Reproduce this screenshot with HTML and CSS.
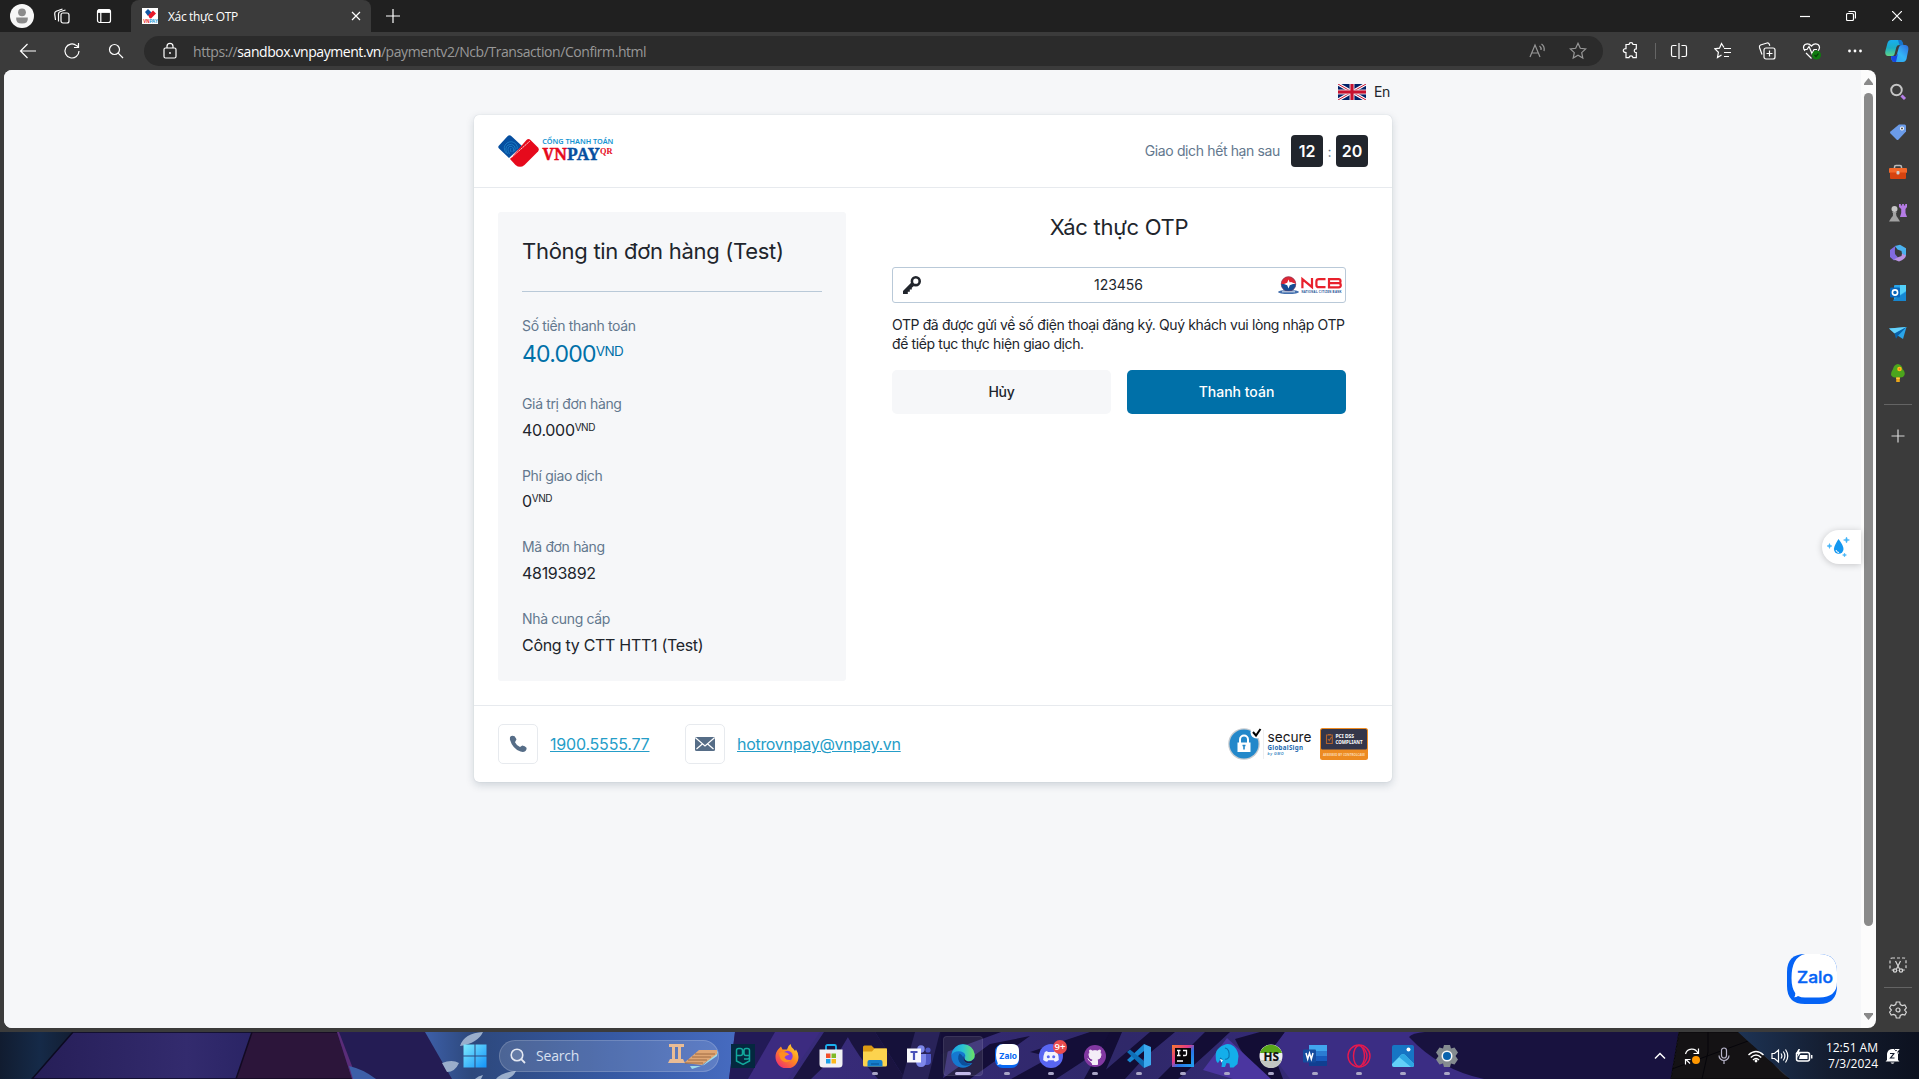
FILE: index.html
```html
<!DOCTYPE html>
<html lang="vi">
<head>
<meta charset="utf-8">
<title>Xác thực OTP</title>
<link rel="stylesheet" href="styles.css">
</head>
<body>
<div class="desktop">
  <div class="browser">
    <header class="tabstrip">
      <div class="tabstrip-left">
        <svg class="profile" width="24" height="24" viewBox="0 0 24 24"><circle cx="12" cy="12" r="12" fill="#f7f7f7"/><circle cx="12" cy="8.300" r="3.900" fill="#8b8b8b"/><path d="M6.200 13.400h11.600q.7 6.200-5.800 6.200t-5.800-6.200z" fill="#8b8b8b"/></svg>
        <svg class="ico" width="18" height="18" viewBox="0 0 18 18"><rect x="8" y="6" width="8" height="10" rx="2"/><path d="M5.500 14.500V7q0-2 2-2.500l5-1.500M2.500 13l-.8-6q-.2-2 1.500-2.700L9.500 2"/></svg>
        <svg class="ico" width="16" height="16" viewBox="0 0 16 16"><rect x="1.500" y="1.500" width="13" height="13" rx="2"/><path d="M2 3.200h12" stroke-width="3.400"/><path d="M4.800 4v10"/></svg>
      </div>
      <div class="tab">
        <svg width="16" height="16" viewBox="0 0 16 16"><rect width="16" height="16" fill="#fff"/><path d="M3 4l3-3 3.500 3.500L6 8z" fill="#1257a4"/><path d="M6.200 7.300L11 2.500l3 3L9 10.500 7.500 10z" fill="#e81929"/><text x="1.200" y="15" font-family="Liberation Sans" font-weight="700" font-size="4.500" fill="#e81929">VN<tspan fill="#1695d6">PAY</tspan></text></svg>
        <span class="tab-title">Xác thực OTP</span>
        <svg class="ico" width="10" height="10" viewBox="0 0 10 10"><path d="M1 1l8 8M9 1L1 9"/></svg>
      </div>
      <svg class="ico newtab" width="14" height="14" viewBox="0 0 14 14"><path d="M7 0v14M0 7h14"/></svg>
      <div class="window-controls">
        <svg class="ico" width="10" height="10" viewBox="0 0 10 10"><path d="M0 5.500h10"/></svg>
        <svg class="ico" width="10" height="10" viewBox="0 0 10 10"><rect x=".5" y="2.500" width="7" height="7" rx="1.300"/><path d="M2.500.5H8Q9.500.5 9.500 2v5.500"/></svg>
        <svg class="ico" width="10" height="10" viewBox="0 0 10 10"><path d="M0 0l10 10M10 0L0 10"/></svg>
      </div>
    </header>

    <div class="toolbar">
      <div class="nav">
        <svg class="ico" width="18" height="16" viewBox="0 0 18 16"><path d="M17 8H1.500M8.500 1l-7 7 7 7"/></svg>
        <svg class="ico" width="18" height="18" viewBox="0 0 18 18"><path d="M16 9A7 7 0 1 1 13.500 3.600L15.500 5M15.500 1v4.500H11"/></svg>
        <svg class="ico" width="16" height="16" viewBox="0 0 16 16"><circle cx="6.500" cy="6.500" r="5"/><path d="M10.200 10.200L15 15"/></svg>
      </div>
      <div class="address">
        <svg class="ico" width="14" height="18" viewBox="0 0 14 18"><rect x="1" y="6" width="12" height="10" rx="1.500"/><path d="M4 6V4.300a3 3 0 0 1 6 0V6"/><circle cx="7" cy="11" r=".9" fill="#fff" stroke="none"/></svg>
        <span class="url">https://<b>sandbox.vnpayment.vn</b>/paymentv2/Ncb/Transaction/Confirm.html</span>
        <svg class="ico dim" width="18" height="16" viewBox="0 0 18 16"><path d="M1 14L6 2l5 12M3 10h6M10.500 3q2 1.500 1.500 4M12.500 1q3.500 2.500 2.500 7"/></svg>
        <svg class="ico dim" width="18" height="18" viewBox="0 0 18 18"><path d="M9 1.300l2.300 5 5.400.6-4 3.700 1.100 5.400L9 13.300 4.200 16l1.100-5.400-4-3.700 5.400-.6z"/></svg>
      </div>
      <div class="actions">
        <svg class="ico" width="18" height="18" viewBox="0 0 18 18"><path d="M4 2.500h3q.2-1.800 2-1.800t2 1.800h3.300v4.300q-2 0-2 1.900t2 1.900v5h-3.300q-.2-1.800-2-1.800t-2 1.800H4v-5q-2.700 0-2.700-2T4 6.700z"/></svg>
        <i class="bar"></i>
        <svg class="ico" width="18" height="16" viewBox="0 0 18 16"><path d="M9 0v16M6.500 2.500H3q-1.500 0-1.500 1.500v8q0 1.500 1.500 1.500h3.500M11.500 2.500H15q1.500 0 1.500 1.500v8q0 1.500-1.500 1.500h-3.500"/></svg>
        <svg class="ico" width="18" height="18" viewBox="0 0 18 18"><path d="M10 5.500L7.500 1.500 5.500 6.200.9 6.800l3.500 3.500L3.500 15.500l4-2.400M10 6.500h7M10 10.500h7M10 14.500h5"/></svg>
        <svg class="ico" width="18" height="18" viewBox="0 0 18 18"><rect x="6" y="6" width="11" height="11" rx="2"/><path d="M11.500 8.500v6M8.500 11.500h6M4 12.500l-2.500-7q-.5-1.800 1-2.500L9 1q1.700-.3 2.300 1.300l.5 1.500"/></svg>
        <svg class="ico" width="20" height="18" viewBox="0 0 20 18"><path d="M3 9Q0 5 3 2.500 6.500.5 9.500 4q3-3.500 6.500-1.500Q19 5 16 9M4 11l5.500 5.500M1.500 7.500H5l2-3 3 7 2-4h3"/><circle cx="14.500" cy="13" r="4.500" fill="#107c10" stroke="none"/><path d="M12.500 13l1.500 1.500 2.500-3" stroke="#0a3f0a"/></svg>
        <svg class="more" width="16" height="4" viewBox="0 0 16 4"><g fill="#fff"><circle cx="2.500" cy="2" r="1.400"/><circle cx="8" cy="2" r="1.400"/><circle cx="13.500" cy="2" r="1.400"/></g></svg>
        <svg class="copilot" width="24" height="24" viewBox="0 0 24 24"><defs><linearGradient id="cp1" x1="0" y1="0" x2="0" y2="1"><stop offset="0" stop-color="#18aef0"/><stop offset=".5" stop-color="#1badc4"/><stop offset="1" stop-color="#62d686"/></linearGradient><linearGradient id="cp2" x1="1" y1="0" x2="0" y2="1"><stop offset="0" stop-color="#2e6de0"/><stop offset=".5" stop-color="#34b5f5"/><stop offset="1" stop-color="#2a9ff0"/></linearGradient></defs><path d="M6 1h8.500q2 0 2.600 2l1 3h-4q-2 0-2.700 2l-2 7.500Q8.500 17.500 6 17H3Q-.5 16.500.4 12L2.500 4Q3.500 1 6 1z" fill="url(#cp1)"/><path d="M13 1h2q2 0 2.600 2l1 3.500h-4L13 1z" fill="#1674cc"/><path d="M18 23H9.500q-2.300 0-2.800-2L6 17.500h3q2.300 0 3-2.500l2-7q.7-2 3-2h3.500q3.500.7 2.800 5L21.500 20Q20.500 23 18 23z" fill="url(#cp2)"/><path d="M6 17h4q2 0 3-3l-2 9H9.500q-2.300 0-2.800-2z" fill="#1745e0"/></svg>
      </div>
    </div>

    <div class="workspace">
      <div class="viewport">
        <main class="page">
          <div class="lang">
            <svg width="28" height="16" viewBox="0 0 28 16"><rect width="28" height="16" fill="#012169"/><path d="M0 0l28 16M28 0L0 16" stroke="#fff" stroke-width="3.200"/><path d="M0 0l28 16M28 0L0 16" stroke="#c8102e" stroke-width="1"/><path d="M14 0v16M0 8h28" stroke="#e3c8d4" stroke-width="5"/><path d="M14 0v16M0 8h28" stroke="#c8102e" stroke-width="3"/></svg>
            <span>En</span>
          </div>

          <section class="card">
            <div class="card-head">
              <svg width="116" height="32" viewBox="0 0 116 32"><path d="M1 10.500L9.500 1.200q2-1.900 4 0L24 11 11 23 1 13.500q-1.500-1.500 0-3z" fill="#064fa0"/><g fill="none" stroke="#258bd0" stroke-width=".7"><path d="M8 18q-4-6 1-10 5-3 9 1 2 3 1 5M9.500 19q-3.500-6 .5-9 4-2 6.500 1 1.500 3 0 5M11.500 19q-3-5-.2-7.500 3-1 4 1.500.7 2-.3 4M13 17q-1-3 0-4"/></g><path d="M12 24L28.500 5q2-2 4 0l7.500 7.500q1.500 2 0 4L26.500 30q-4.500 3.700-9 0z" fill="#e60a1c"/><path d="M13.500 22.500L32 6" stroke="#fff" stroke-width=".8" stroke-dasharray="2 .5"/><text x="44.300" y="9.300" font-family="Noto Sans" font-weight="600" font-size="7.300" textLength="71" fill="#1494d2">CỔNG THANH TOÁN</text><text x="44.500" y="24.600" font-family="Noto Serif, Liberation Serif, serif" font-weight="700" font-size="17" textLength="57" lengthAdjust="spacingAndGlyphs" fill="#e60a1c" stroke="#e60a1c" stroke-width=".4">VN<tspan fill="#064fa0" stroke="#064fa0">PAY</tspan></text><text x="102" y="18.500" font-family="Liberation Serif, serif" font-weight="700" font-size="9" textLength="12.500" lengthAdjust="spacingAndGlyphs" fill="#e60a1c">QR</text></svg>
              <div class="timer">
                <span class="timer-label">Giao dịch hết hạn sau</span>
                <b>12</b><i>:</i><b>20</b>
              </div>
            </div>

            <div class="card-body">
              <aside class="order">
                <h2>Thông tin đơn hàng (Test)</h2>
                <dl>
                  <div class="total"><dt>Số tiền thanh toán</dt><dd>40.000<sup>VND</sup></dd></div>
                  <div><dt>Giá trị đơn hàng</dt><dd>40.000<sup>VND</sup></dd></div>
                  <div><dt>Phí giao dịch</dt><dd>0<sup>VND</sup></dd></div>
                  <div><dt>Mã đơn hàng</dt><dd>48193892</dd></div>
                  <div><dt>Nhà cung cấp</dt><dd>Công ty CTT HTT1 (Test)</dd></div>
                </dl>
              </aside>
              <div class="otp">
                <h2>Xác thực OTP</h2>
                <div class="field">
                  <svg width="18" height="18" viewBox="0 0 18 18"><circle cx="12.800" cy="5.200" r="3.900" fill="none" stroke="#21252c" stroke-width="2.600"/><path d="M8.600 6.200L0 15v3h4.800v-2.200h2V13.500h2v-1.800l2.700-2.200z" fill="#21252c"/></svg>
                  <span>123456</span>
                  <svg width="64" height="20" viewBox="0 0 64 20"><ellipse cx="10.500" cy="17" rx="10.500" ry="2" fill="#4470ae"/><path d="M3 9a7.500 7.500 0 0 0 15 0z" fill="#164c93"/><path d="M3 9a7.500 7.500 0 0 1 15 0l-5-2-5 2z" fill="#df2633"/><circle cx="10.500" cy="9" r="7.300" fill="none" stroke="#7c3c62" stroke-width=".6"/><path d="M10.500 4.600l1.300 3.100 3.200 1.300-3.200 1.300-1.300 3.100-1.300-3.100L6 9l3.200-1.300z" fill="#fff"/><path d="M4 16.800h13" stroke="#fff" stroke-width=".8"/><g fill="none" stroke="#e8212c" stroke-width="2.200"><path d="M24.400 13.300V4.200l9.600 8V3M47.500 4.200H41q-2.600 0-2.600 2.300v3.400q0 2.300 2.600 2.300h6.500M51 8.200h10.500M51 12.300V4.200h9.500q2 0 2 2t-2 2q2.300 0 2.300 2t-2.300 2.100z"/></g><text x="23.500" y="17.500" font-family="Liberation Sans" font-weight="700" font-size="2.800" textLength="40" fill="#164c93">NATIONAL CITIZEN BANK</text></svg>
                </div>
                <p>OTP đã được gửi về số điện thoại đăng ký. Quý khách vui lòng nhập OTP để tiếp tục thực hiện giao dịch.</p>
                <div class="buttons">
                  <button type="button" class="cancel">Hủy</button>
                  <button type="button" class="pay">Thanh toán</button>
                </div>
              </div>
            </div>

            <footer class="card-foot">
              <span class="contact-icon"><svg width="18" height="18" viewBox="0 0 18 18"><path d="M.9 4.400L1 2q2-2.200 4.600-.7l1.900 3L6 7.200q1.300 3 5 4.700l2.300-1.500q2.700.3 4.200 2.300.4 1.800-1 3.300-2 1.700-5 .6Q3.500 13.500.9 4.400z" fill="#566d87"/></svg></span>
              <a class="phone" href="#">1900.5555.77</a>
              <span class="contact-icon"><svg width="20" height="14" viewBox="0 0 20 14"><rect width="20" height="14" rx="1.500" fill="#566d87"/><path d="M.5.800L10 9 19.500.8M1.500 12l5.800-5M18.500 12l-5.800-5" fill="none" stroke="#fff" stroke-width="1.200"/></svg></span>
              <a class="mail" href="#">hotrovnpay@vnpay.vn</a>
              <div class="badges">
                <svg width="84" height="34" viewBox="0 0 84 34"><circle cx="16" cy="17" r="15.800" fill="#c6cbd0"/><circle cx="16" cy="17" r="14.500" fill="#2388ca"/><circle cx="28.500" cy="5.500" r="6" fill="#fff"/><path d="M25 5l3 3.500L32.500 2" fill="none" stroke="#000" stroke-width="2"/><rect x="9.500" y="15.500" width="13" height="9.500" fill="#fff"/><path d="M12 16v-3.500a4 4 0 0 1 8 0V16" fill="none" stroke="#fff" stroke-width="2"/><path d="M16 18v4.500M14.500 18.500h3" stroke="#2388ca" stroke-width="1.600"/><path d="M35.500 3v29" stroke="#e8e8ea" stroke-width=".7"/><text x="39.500" y="14.500" font-family="Inter" font-size="14.500" textLength="44" lengthAdjust="spacingAndGlyphs" fill="#18181b">secure</text><text x="39.500" y="23" font-family="Noto Sans" font-weight="700" font-size="6.200" textLength="35.500" fill="#1a68ae">GlobalSign</text><text x="39.500" y="28" font-family="Liberation Sans" font-style="italic" font-weight="700" font-size="3.500" textLength="16" fill="#2d7fc0">by GMO</text></svg>
                <svg width="48" height="32" viewBox="0 0 48 32"><rect width="48" height="32" rx="2.500" fill="#ed8b22"/><rect x="1" y="1" width="46" height="20.500" rx="1.500" fill="#34364a"/><path d="M6.500 7h5.800v8.500H6.500zM8 6.500h3M8 11l1.300 1.500L11.500 9" fill="none" stroke="#b0622f" stroke-width="1.100"/><g font-family="Noto Sans" font-weight="700" fill="#fff"><text x="15.500" y="10.300" font-size="5.500" textLength="18.500" lengthAdjust="spacingAndGlyphs">PCI DSS</text><text x="15.500" y="16" font-size="5.500" textLength="27" lengthAdjust="spacingAndGlyphs">COMPLIANT</text><text x="3" y="28" font-size="3.600" textLength="42" lengthAdjust="spacingAndGlyphs" fill="#fbdcb5">ASSESSED BY CONTROLCASE</text></g></svg>
              </div>
            </footer>
          </section>

          <div class="drop"><svg width="24" height="22" viewBox="0 0 24 22"><path d="M11.500 3q5 6.500 5 10a4.800 4.800 0 0 1-9.600 0Q7 10 11.500 3z" fill="#1397f0"/><path d="M9 14q.5 2.500 3 2.500" stroke="#fff" stroke-width="1" fill="none"/><path d="M19.500 1l.8 2.200 2.200.8-2.200.8-.8 2.200-.8-2.200L16.500 4l2.200-.8zM2.500 7.500l.7 1.800 1.800.7-1.800.7-.7 1.800-.7-1.800L0 10l1.800-.7zM17.500 17l.5 1.500 1.500.5-1.500.5-.5 1.500-.5-1.500-1.500-.5 1.500-.5z" fill="#41b2f7" stroke="#41b2f7" stroke-width=".5"/></svg></div>
          <svg class="zalo" width="50" height="50" viewBox="0 0 50 50"><path d="M18 0h14q18 0 18 18v14q0 18-18 18H18Q0 50 0 32V18Q0 0 18 0z" fill="#0563f5"/><path d="M18 0h14q18 0 18 18v10q0 15.500-18 15.500H18q-4 0-7-1.500-1.500 1.300-4 1.300 1.500-1.500 1.300-4Q4.500 34 4.500 24 4.500 3 18 0z" fill="#fff"/><text x="10" y="29" font-family="Inter" font-weight="500" font-size="16" textLength="36" lengthAdjust="spacingAndGlyphs" fill="#0563f5" stroke="#0563f5" stroke-width=".4">Zalo</text></svg>
        </main>
        <div class="scrollbar">
          <svg width="9" height="7" viewBox="0 0 9 7"><path d="M4.500 0L9 5.500V7H0V5.500z" fill="#8a8a8a"/></svg>
          <i class="thumb"></i>
          <svg width="9" height="7" viewBox="0 0 9 7"><path d="M4.500 7L9 1.500V0H0v1.500z" fill="#8a8a8a"/></svg>
        </div>
      </div>

      <nav class="sidebar">
        <svg width="18" height="18" viewBox="0 0 18 18"><circle cx="7.500" cy="7" r="5.300" fill="none" stroke="#c6c6c6" stroke-width="1.900"/><path d="M12.500 12.500l3.500 3.500" stroke="#b67fe8" stroke-width="3"/></svg>
        <svg width="18" height="18" viewBox="0 0 18 18"><path d="M10 1.500h5.500q1.500 0 1.500 1.500v5.500L9.500 16.500q-1 1-2 0L1.500 10.500q-1-1 0-2z" fill="#6b9be8"/><circle cx="13" cy="5.500" r="2" fill="#fff"/><circle cx="13" cy="5.500" r=".9" fill="#333"/></svg>
        <svg width="18" height="18" viewBox="0 0 18 18"><path d="M5.500 5V4q0-1.500 1.500-1.500h4q1.500 0 1.500 1.500v1" fill="none" stroke="#bbb" stroke-width="1.500"/><rect y="5" width="18" height="5" rx="1" fill="#f4682a"/><path d="M1 9.500h16V15q0 1-1 1H2q-1 0-1-1z" fill="#d6430f"/><rect x="7.500" y="8" width="3" height="3.500" rx="1" fill="#d0d0d0"/></svg>
        <svg width="18" height="18" viewBox="0 0 18 18"><circle cx="5.500" cy="5" r="3" fill="#c5c5c5"/><path d="M3 8h5l-1 1q0 3 1.500 4.500L11 17.500H0L2.500 13.500Q4.500 12 4 9z" fill="#a2a2a2"/><path d="M10 0h1.800v1.500h1.300V0h1.800v1.500h1.300V0H18v3l-1.500 2v4l1.500 4h-7l1.200-4V5L10 3z" fill="#b57ce5"/></svg>
        <svg width="18" height="18" viewBox="0 0 18 18"><path d="M6 2l5-1.300 6 3.500V12l-4-2.200L12.500 7 8.500 5.500z" fill="#4ab2ef"/><path d="M7 1.500q-1.500 2-1 8.500l3 3.500L5 16.500 1 13V6z" fill="#826be0"/><path d="M13 9.500l4 2q-.5 3.500-7 6L5 15.500l4-2.300 3.500-1.200z" fill="#b993e2"/></svg>
        <svg width="18" height="18" viewBox="0 0 18 18"><rect x="5" y="1" width="12" height="16" rx="1" fill="#29a6ea"/><path d="M11 1h6v6l-6 4z" fill="#52d0f9"/><path d="M4 16l13-8v8q0 1-1 1H5q-1 0-1-1z" fill="#1687d1"/><rect x="1" y="3.500" width="10" height="10" rx="1" fill="#0865ba"/><circle cx="6" cy="8.500" r="2.600" fill="none" stroke="#fff" stroke-width="1.600"/></svg>
        <svg width="18" height="18" viewBox="0 0 18 18"><path d="M0 4.500L17.500 3 14 15l-5-3.200z" fill="#2aa5e9"/><path d="M0 4.500L17.500 3 5.500 9.500z" fill="#65d2fb"/><path d="M5.500 9.500L17.500 3 9 11.800l-2 3z" fill="#0862aa"/></svg>
        <svg width="18" height="18" viewBox="0 0 18 18"><path d="M9 0q4 1 4.500 5 3 3 2 6-1 2.500-4 2.500H6q-3.500-.3-4-3Q2 8 4 5q1-4.500 5-5z" fill="#4ca51d"/><path d="M7.200 13.500h3.600V18H7.200z" fill="#eba619"/><path d="M7.200 13.500h3.600v1.500H7.200z" fill="#ffcd3d"/><circle cx="10.500" cy="5" r="2.300" fill="#ffbd18"/><circle cx="10.500" cy="5" r=".8" fill="#f15a22"/></svg>
        <i class="rule"></i>
        <svg class="ico soft" width="14" height="14" viewBox="0 0 14 14"><path d="M7 .500v13M.5 7h13"/></svg>
        <div class="sidebar-end">
          <svg class="ico soft" width="18" height="18" viewBox="0 0 18 18"><rect x="1" y="2" width="16" height="12" rx="2" stroke-dasharray="3 2"/><path d="M6.500 6l4 8M11.500 6l-4 8" stroke="#3b3b3b" stroke-width="3.500"/><path d="M6.500 5l4 8M11.500 5l-4 8"/><circle cx="6" cy="14.500" r="1.700"/><circle cx="12" cy="14.500" r="1.700"/></svg>
          <i class="rule"></i>
          <svg class="ico soft" width="18" height="18" viewBox="0 0 18 18"><path d="M7.300 1h3.400l.6 2.500 2 1.100 2.500-.7 1.600 2.900L15.600 9l1.800 2.200-1.600 2.900-2.500-.7-2 1.100-.6 2.500H7.300l-.6-2.500-2-1.100-2.500.7L.6 11.200 2.400 9 .6 6.800l1.600-2.900 2.500.7 2-1.100z"/><circle cx="9" cy="9" r="2"/></svg>
        </div>
      </nav>
    </div>
  </div>

  <div class="taskbar">
    <svg class="wallpaper" width="1919" height="47" viewBox="0 0 1919 47" preserveAspectRatio="none">
      <defs>
        <linearGradient id="w1"><stop offset="0" stop-color="#111c30"/><stop offset=".5" stop-color="#152a48"/><stop offset="1" stop-color="#121b2d"/></linearGradient>
        <linearGradient id="w2"><stop offset="0" stop-color="#261e57"/><stop offset=".7" stop-color="#332b6e"/><stop offset="1" stop-color="#2a2465"/></linearGradient>
        <linearGradient id="w3"><stop offset="0" stop-color="#3d5fa8"/><stop offset=".15" stop-color="#2d487c"/><stop offset=".6" stop-color="#3659a3"/><stop offset="1" stop-color="#466bc0"/></linearGradient>
        <linearGradient id="w4"><stop offset="0" stop-color="#1d3354"/><stop offset=".5" stop-color="#141d30"/><stop offset="1" stop-color="#0c111f"/></linearGradient>
        <linearGradient id="w5"><stop offset="0" stop-color="#3a2c7e"/><stop offset=".5" stop-color="#2f2869"/><stop offset="1" stop-color="#3c2d87"/></linearGradient>
      </defs>
      <path d="M0 0h80v47H0z" fill="url(#w1)"/>
      <path d="M73 0h180l-16 47H32z" fill="url(#w2)" stroke="#0b0a20" stroke-width="1.500"/>
      <path d="M252 0h87l16 47H236z" fill="#2c153a" stroke="#120a22" stroke-width="1.500"/>
      <path d="M337 0h90l27 47H352z" fill="#241c54"/>
      <path d="M337 0h2l18 47h-5z" fill="#5a2c78"/>
      <path d="M349 34q14 3 27 13h-23z" fill="#3d5fa8"/>
      <path d="M425 0h310v47H452z" fill="url(#w3)"/>
      <path d="M460 14q4-13 23-14-5 11-23 14zM442 31q10-4 17 0-4 9-12 9zM496 47q6-7 20-8-3 6-9 8zM475 47q3-3 8-4l-2 4z" fill="#9aaecb"/>
      <path d="M735 0h790v47H729z" fill="url(#w5)"/>
      <path d="M735 0h82l-30 24-20 23h-38z" fill="#221a57"/>
      <path d="M775 0h45l-32 47h-40z" fill="#3c2b80"/>
      <path d="M824 0h27l-12 20-28 27h-18zM845 0h30l30 47h-27q-20-22-33-47z" fill="#1a1440"/>
      <path d="M875 0h76l-8 47h-38z" fill="#15113a"/>
      <path d="M915 0h25l-12 47h-26z" fill="#292359"/>
      <path d="M941 0h60l-60 22zM1030 20l60-20h30l-38 30-26 17h-45l40-22zM990 12l40-8-60 43h-28z" fill="#140e38"/>
      <path d="M1110 0h12l-20 47h-18zM1150 0h25l-30 25-20 22h-30zM1205 0h25q-30 28-52 47h-20zM1260 0h25l-12 20 10 27h-20q-20-22-28-40z" fill="#130d35"/>
      <path d="M1227 6l-24 32 30 9h38z" fill="#4b36a0"/>
      <path d="M1285 0h140q-15 4 20 26 20 14 23 21H1290l-20-27z" fill="#3b2d84"/>
      <path d="M1425 0h254l-8 47h-187q-44-9-75-42 3-4 16-5z" fill="#18123f"/>
      <path d="M1679 0h60l50 47h-118z" fill="#141214" stroke="#08070b"/>
      <path d="M1708 0v20l-6 27M1672 37l76-28M1740 0l50 47" fill="none" stroke="#06050a"/>
      <path d="M1738 0h181v47h-129z" fill="url(#w4)"/>
    </svg>

    <div class="apps">
      <span class="start"><svg width="24" height="24" viewBox="0 0 24 24"><defs><linearGradient id="ms" x2="1" y2="1"><stop offset="0" stop-color="#7deafe"/><stop offset="1" stop-color="#1393f8"/></linearGradient></defs><path d="M.5.500h11v11H.5zM12.500.5h11v11h-11zM.5 12.500h11v11H.5zM12.500 12.500h11v11h-11z" fill="url(#ms)"/></svg></span>
      <div class="search">
        <svg width="16" height="16" viewBox="0 0 16 16"><circle cx="7" cy="7" r="5.800" fill="#ffffff22" stroke="#e4e8f2" stroke-width="1.600"/><path d="M11.200 11.200L15 15" stroke="#e4e8f2" stroke-width="1.800"/></svg>
        <span>Search</span>
        <svg width="50" height="26" viewBox="0 0 50 26"><g fill="#e9bc95"><path d="M1 1h15v3H1zM2 16h13l2 4H0z"/><path d="M4 4h3v12H4zM10 4h3v12h-3z"/></g><path d="M22 23h12l13-12 3-3-1 5-13 9-12 4z" fill="#9ddbe9"/><path d="M16 20l15-13h18v4L34 22z" fill="#dfa674"/><path d="M17 20h18M20 17h19M24 14h19M27 11h20" stroke="#8d5c36" stroke-width=".8"/></svg>
      </div>
      <span class="app"><svg width="24" height="24" viewBox="0 0 24 24"><rect width="24" height="24" fill="#04283f"/><path d="M5.500 16V6.500q0-2 2-2h2q2 0 2 2v3q0 2-2 2h-4M18.500 8v9L12 20.500 5.500 17v-3M18.500 11.500h-3.500q-2 0-2-2v-3q0-2 2-2h1.500q2 0 2 2V13q0 2-2 2H13" fill="none" stroke="#12a89c" stroke-width="1.500"/></svg></span>
      <span class="app"><svg width="24" height="24" viewBox="0 0 24 24"><defs><linearGradient id="ff" x1="1" y1="0" x2=".2" y2="1"><stop offset="0" stop-color="#ffe336"/><stop offset=".5" stop-color="#ff8b1e"/><stop offset="1" stop-color="#f02c72"/></linearGradient></defs><path d="M3.500 5L6 2.500l1.500 3L12 5.500Q13 1.500 15.500 0q.5 3.500 3 5L20 7l1-1.500Q23.500 9 23.500 13A11.500 11.500 0 0 1 .5 13Q.5 8 3.500 5z" fill="url(#ff)"/><circle cx="12.500" cy="12" r="5.200" fill="#843ce0"/><path d="M4 9q4-2 8.500 0l2 2q-4-.5-5 2.500 2 3.500 7 2.300-3 3.200-7.500 2Q4.500 16 4 9z" fill="#ff8e20"/></svg></span>
      <span class="app"><svg width="24" height="24" viewBox="0 0 24 24"><path d="M7 6V2.500Q7 1 8.500 1h7Q17 1 17 2.500V6" fill="none" stroke="#1bb0ee" stroke-width="1.800"/><path d="M.5 5.500h23V20q0 3.500-3.500 3.500H4Q.5 23.500.5 20z" fill="#f1f1f4"/><path d="M7 9.500h4.500V14H7z" fill="#f1502b"/><path d="M12.500 9.500H17V14h-4.500z" fill="#7fb927"/><path d="M7 15h4.500v4.500H7z" fill="#1ba1e8"/><path d="M12.500 15H17v4.500h-4.500z" fill="#fcb81b"/></svg></span>
      <span class="app run"><svg width="24" height="24" viewBox="0 0 24 24"><path d="M0 3q0-1.500 1.500-1.500h7l3 3H24V9H0z" fill="#dc9a13"/><path d="M0 7.500h9l2.500-3H23q1 0 1 1V21q0 1.500-1.500 1.500h-21Q0 22.500 0 21z" fill="#fcd34e"/><path d="M4.500 22.500V18q0-2 2-2h11q2 0 2 2v4.500z" fill="#157fcc"/><path d="M8 20h8" stroke="#0b589b" stroke-width="1.200"/></svg></span>
      <span class="app"><svg width="24" height="24" viewBox="0 0 24 24"><circle cx="14" cy="5" r="3.700" fill="#7d87ea"/><circle cx="21" cy="6" r="2.600" fill="#4f58c5"/><path d="M17 10h7v7q0 4-4 4h-3z" fill="#4f58c5"/><path d="M9 10h10v7q0 6-5 6t-5-6z" fill="#7d87ea"/><rect y="4.500" width="14" height="14" fill="#f9f9fd"/><path d="M3.500 8h7M7 8v8" stroke="#4a52b8" stroke-width="2.200"/></svg></span>
      <span class="app run active"><svg width="24" height="24" viewBox="0 0 24 24"><defs><linearGradient id="ed" x1="0" y1=".3" x2="1" y2=".3"><stop offset="0" stop-color="#1aa0e2"/><stop offset=".5" stop-color="#2bc3d2"/><stop offset="1" stop-color="#6ee360"/></linearGradient></defs><circle cx="12" cy="12" r="11.700" fill="#1578d0"/><path d="M.5 11A11.500 11.500 0 0 1 12 .3q10 .5 11.700 10 .3 6.500-5.700 7-5 0-4-3.500 1.500-5-4-6.300Q3 6.500.5 11z" fill="url(#ed)"/><path d="M8.500 9.500q-4 6 2.500 11.500 5 2 9-1-7-.5-7.500-5-.5-4-4-5.500z" fill="#0c4f9b"/><path d="M13.500 10.800q-1.500 3.800 1.500 5.700 4 2.700 9-2.500-.5 3-2.200 4.900-5.300.9-7.600-.9-3-3-.7-7.200z" fill="#241f4d"/></svg></span>
      <span class="app run"><svg width="24" height="24" viewBox="0 0 24 24"><rect width="24" height="24" rx="7.500" fill="#0868f3"/><path d="M8 0h9q7 0 7 7v7q0 7-7 7H8q-2 0-3-.7-1 .8-3 .8 1-1 .7-2.200Q1 16 1 11 1 0 8 0z" fill="#fff"/><text x="4" y="14.500" font-family="Inter" font-weight="700" font-size="8" textLength="18" lengthAdjust="spacingAndGlyphs" fill="#0868f3">Zalo</text></svg></span>
      <span class="app run"><svg width="24" height="24" viewBox="0 0 24 24"><circle cx="12" cy="12" r="12" fill="#5966f1"/><path d="M8 7l-2.200 1Q4 12 4.200 16q2 1.700 4 1.800l1-1.500h5.600l1 1.500q2-.1 4-1.800Q20 12 18.200 8L16 7l-.8 1H8.800z" fill="#f2f3fd"/><circle cx="9.300" cy="12.800" r="1.500" fill="#5966f1"/><circle cx="14.700" cy="12.800" r="1.500" fill="#5966f1"/></svg><em>9+</em></span>
      <span class="app run"><svg width="24" height="24" viewBox="0 0 24 24"><circle cx="12" cy="12" r="11" fill="#8238a2"/><path d="M9.500 20.500v-3q-3 .5-3.700-1.500l-1-1.500M14.500 20.500V17q0-1-.5-1.500 4-.7 4-4.500 0-1.500-.8-2.500.4-1.300 0-2.500-1.500.1-2.700 1-2.500-.6-5 0-1.200-.9-2.700-1-.4 1.200 0 2.500-.8 1-.8 2.500 0 3.800 4 4.500-.5.500-.5 1.500v3.500z" fill="#f4edf7" stroke="#f4edf7"/></svg></span>
      <span class="app run"><svg width="24" height="24" viewBox="0 0 24 24"><path d="M17 0l7 3v18l-7 3z" fill="#3ba9ef"/><path d="M17 0v7L3 18.500 0 16z" fill="#1887d1"/><path d="M17 24v-7L3 5.500 0 8z" fill="#0e6fb6"/></svg></span>
      <span class="app run"><svg width="24" height="24" viewBox="0 0 24 24"><defs><linearGradient id="ij" x2="1" y2="1"><stop offset="0" stop-color="#fb7b2b"/><stop offset=".4" stop-color="#e33889"/><stop offset=".6" stop-color="#2974e8"/><stop offset="1" stop-color="#21a7ef"/></linearGradient></defs><rect x="1" y="1" width="22" height="22" fill="url(#ij)"/><rect x="4" y="4" width="16" height="16" fill="#090609"/><path d="M6 6.500h3.500M7.700 6.500v5M6 11.500h3.500M12 6.500h3.500v3.700q0 1.300-1.300 1.300H12M6 17h6" fill="none" stroke="#fff" stroke-width="1.300"/></svg></span>
      <span class="app run"><svg width="24" height="24" viewBox="0 0 24 24"><path d="M9 1q5-2.500 10 1.500 4 4 4.500 9.500l-1 8-4 3.500h-3.500l-.5-4-3-.5-1.500 4H6.500l.5-4-2-3L3 19q-2.300-1-2.200-5.500Q0 7 4 4q2-2 5-3z" fill="#14aeea"/><path d="M10 4q5 1 4 9-2 3-4 2M5 14l2 1.500-2 1" fill="none" stroke="#0b70ad" stroke-width="1.200"/><path d="M5 15l3 1-1.500 2.500z" fill="#fff"/></svg></span>
      <span class="app run"><svg width="24" height="24" viewBox="0 0 24 24"><circle cx="12" cy="12" r="11.500" fill="#eceded"/><path d="M1 9a11.500 11.500 0 0 1 22 0z" fill="#59a719"/><path d="M1 16a11.500 11.500 0 0 0 22 0z" fill="#c2c6c2"/><text x="4.500" y="16.500" font-family="Noto Sans" font-weight="800" font-size="12.500" textLength="15.500" lengthAdjust="spacingAndGlyphs" fill="#151515">HS</text></svg></span>
      <span class="app run"><svg width="24" height="24" viewBox="0 0 24 24"><path d="M6 1h18v6H6z" fill="#41a5ee"/><path d="M6 7h18v5H6z" fill="#2b7cd3"/><path d="M6 12h18v5H6z" fill="#185abd"/><path d="M6 17h18v5H6z" fill="#103f91"/><rect y="5.500" width="13" height="13" rx="1" fill="#154c9e"/><path d="M3 9l1.700 6 1.800-6 1.800 6L10 9" fill="none" stroke="#fff" stroke-width="1.500"/></svg></span>
      <span class="app run"><svg width="24" height="24" viewBox="0 0 24 24"><g fill="none" stroke="#e6194e" stroke-width="1.400"><circle cx="12" cy="12" r="11"/><ellipse cx="12" cy="12" rx="5.500" ry="10.500"/><path d="M16 3.500q8 8.500 0 17"/></g></svg></span>
      <span class="app run"><svg width="24" height="24" viewBox="0 0 24 24"><rect x="1" y="1" width="22" height="22" rx="2" fill="#1675c4"/><path d="M1 20l9-9q2-1.800 4 0l9 9v1q0 2-2 2H3q-2 0-2-2z" fill="#63d0f8"/><path d="M10 11q2-1.800 4 0l9 9v1q0 2-2 2h-1L8 13z" fill="#2ea7e2"/><circle cx="17.500" cy="5.500" r="2" fill="#fff"/></svg></span>
      <span class="app run"><svg width="24" height="24" viewBox="0 0 24 24"><path d="M9 1h6l1 3.500 3.500-1L23 8.500 20.500 12l2.500 3.500-3.500 5-3.500-1L15 23H9l-1-3.500-3.500 1L1 15.500 3.500 12 1 8.500l3.500-5 3.500 1z" fill="#848b90"/><circle cx="12" cy="12" r="5.500" fill="#f6f7f8"/><circle cx="12" cy="12" r="4" fill="#0a62ad"/></svg></span>
    </div>

    <div class="tray">
      <svg class="ico bold" width="12" height="8" viewBox="0 0 12 8"><path d="M1 6.500L6 1.500l5 5"/></svg>
      <svg class="ico sync" width="18" height="18" viewBox="0 0 18 18"><path d="M2.500 7A6.500 6.500 0 0 1 14.800 6M15.500 1.500V6.500h-5M7 16.500l-4-4M2.500 17.500v-5h5"/><circle cx="13" cy="13" r="4" fill="#ff9800" stroke="none"/></svg>
      <svg class="ico mic" width="14" height="18" viewBox="0 0 14 18"><rect x="4.500" y="1" width="5" height="10" rx="2.500"/><path d="M2 8.500a5 5 0 0 0 10 0M7 13.500V17"/></svg>
      <svg class="ico bold" width="18" height="14" viewBox="0 0 18 14"><path d="M1.500 6q7.500-7 15 0M3.800 8.500q5.200-5 10.400 0M6 11q3-3 6 0"/><circle cx="9" cy="12" r="1.400" fill="#fff" stroke="none"/></svg>
      <svg class="ico" width="18" height="16" viewBox="0 0 18 16"><path d="M1 5.500h2.500L7.500 2v12l-4-3.500H1zM10 5.500q1.800 2.500 0 5M12.300 3.500q3.200 4.500 0 9M14.500 1.500q4.500 6.500 0 13"/></svg>
      <svg class="ico bold" width="18" height="14" viewBox="0 0 18 14"><rect x="1.500" y="3.500" width="13" height="8.500" rx="2"/><path d="M16.700 6v3.500"/><path d="M5 6h7.500v4H4z" fill="#fff" stroke="none"/><path d="M3.500 0L.5 5H3l-1 4 4-5.500H3.800L5 0z" fill="#fff" stroke="none"/></svg>
      <div class="clock"><span>12:51 AM</span><span>7/3/2024</span></div>
      <svg width="16" height="16" viewBox="0 0 16 16"><path d="M2 12V6q.5-4.500 5-5h2l4 5v6l1.500 1.500H.5zM5.500 14.500h4q-2 2.500-4 0z" fill="#fff"/><path d="M5 5.500h4L5.500 10H9.500" fill="none" stroke="#131b2d" stroke-width="1.200"/><path d="M10 1.500h3.500L10.500 5H14" fill="none" stroke="#fff" stroke-width="1.200"/></svg>
    </div>
  </div>
</div>
</body>
</html>
```

FILE: styles.css
```css
* { box-sizing: border-box; }
body { margin: 0; overflow: hidden; }
svg { display: block; flex: none; }
h2, p, dl, dd { margin: 0; }

.desktop {
  width: 1919px;
  height: 1079px;
  display: flex;
  flex-direction: column;
  font-family: "Open Sans", "Noto Sans", sans-serif;
}
.ico { fill: none; stroke: #fff; stroke-width: 1.2; }
.ico.dim { stroke: #989898; }
.ico.soft { stroke: #d6d6d6; }
.ico.bold { stroke-width: 1.5; }

/* Browser frame */
.browser {
  height: 1032px;
  display: flex;
  flex-direction: column;
  background: #3b3b3b;
}
.tabstrip {
  height: 32px;
  display: flex;
  align-items: center;
  background: #202020;
}
.tabstrip-left {
  width: 131px;
  padding-left: 10px;
  display: flex;
  align-items: center;
}
.tabstrip-left svg:nth-child(2) { margin-left: 19px; }
.tabstrip-left svg:nth-child(3) { margin-left: 25px; }
.tab {
  width: 240px;
  height: 32px;
  padding: 0 10px 0 11px;
  display: flex;
  align-items: center;
  background: #3b3b3b;
  border-radius: 8px 8px 0 0;
}
.tab-title {
  flex: 1;
  margin-left: 10px;
  color: #fff;
  font-size: 12px;
  letter-spacing: -0.35px;
}
.newtab { margin-left: 15px; }
.window-controls {
  margin-left: auto;
  padding-right: 17px;
  display: flex;
  gap: 36px;
}
.toolbar {
  height: 38px;
  display: flex;
  align-items: center;
}
.nav {
  width: 144px;
  padding-left: 19px;
  display: flex;
  align-items: center;
  gap: 26px;
}
.nav svg:last-child { margin-left: 1px; }
.address {
  width: 1459px;
  height: 30px;
  padding: 0 16px 0 19px;
  display: flex;
  align-items: center;
  border-radius: 15px;
  background: #2b2b2b;
}
.url {
  flex: 1;
  margin-left: 16px;
  color: #989898;
  font-size: 14px;
  letter-spacing: -0.43px;
}
.url b { color: #fff; font-weight: 400; }
.address .dim + .dim { margin-left: 22px; }
.actions {
  flex: 1;
  padding-left: 19px;
  display: flex;
  align-items: center;
  gap: 26px;
}
.bar { width: 1px; height: 16px; margin: 0 -12px 0 -11px; background: #656565; }
.more { margin-left: -1px; }
.copilot { margin-left: -4px; }
.workspace { height: 958px; display: flex; padding-left: 4px; }
.viewport {
  width: 1872px;
  display: flex;
  overflow: hidden;
  border-radius: 8px;
  background: #fcfcfc;
}
.page {
  position: relative;
  width: 1857px;
  padding: 9px 469px 0 470px;
  background: #f6f7f9;
  font-family: Inter, sans-serif;
  color: #21252c;
}
.scrollbar {
  width: 15px;
  padding: 8px 0 8px;
  display: flex;
  flex-direction: column;
  align-items: center;
}
.thumb { width: 9px; height: 833px; margin: 8px 0 auto; border-radius: 5px; background: #8a8a8a; }
.sidebar {
  width: 43px;
  padding-top: 13px;
  display: flex;
  flex-direction: column;
  align-items: center;
  gap: 22.2px;
}
.rule { width: 28px; height: 1px; background: #646464; }
.sidebar > .rule { margin-top: -1px; }
.sidebar > .rule + svg { margin-top: 2px; }
.sidebar-end {
  margin: auto 0 9px;
  display: flex;
  flex-direction: column;
  align-items: center;
  gap: 13px;
}

/* Payment page */
.lang {
  height: 36px;
  padding: 0 2px 11px 0;
  display: flex;
  align-items: center;
  justify-content: flex-end;
  gap: 8px;
  font-size: 14px;
  letter-spacing: -0.3px;
}
.card {
  width: 918px;
  height: 667px;
  border-radius: 5px;
  background: #fff;
  box-shadow: 0 3px 9px #1630482e, 0 0 1px #16304838;
}
.card-head {
  height: 73px;
  padding: 0 24px;
  display: flex;
  align-items: center;
  justify-content: space-between;
  border-bottom: 1px solid #e7eaee;
}
.timer { display: flex; align-items: center; font-size: 14px; color: #63788e; }
.timer-label { margin: -1px 11px 0 0; letter-spacing: -0.37px; }
.timer i { width: 13px; text-align: center; font-style: normal; }
.timer b {
  width: 32px;
  height: 32px;
  border-radius: 4px;
  background: #21252c;
  color: #fff;
  font-size: 16px;
  font-weight: 600;
  line-height: 32px;
  text-align: center;
}
.card-body {
  height: 518px;
  padding: 24px 46px 24px 24px;
  display: flex;
  gap: 46px;
  border-bottom: 1px solid #e7eaee;
}
.order {
  width: 348px;
  height: 469px;
  padding: 24px 24px 0;
  border-radius: 3px;
  background: #f6f7f9;
}
h2 { font-size: 22px; font-weight: 400; line-height: 30px; letter-spacing: -0.28px; }
.order h2 {
  height: 56px;
  border-bottom: 1px solid #b9c9d8;
}
.order dl { padding-top: 24px; display: flex; flex-direction: column; gap: 24px; }
dt { font-size: 14px; line-height: 20px; color: #63788e; letter-spacing: -0.35px; }
dd { margin-top: 3.7px; font-size: 16px; line-height: 24px; letter-spacing: -0.3px; }
sup { font-size: 10px; line-height: 0; vertical-align: 5px; letter-spacing: -0.5px; }
.total { height: 53.9px; }
.total dd { margin-top: 3px; color: #0070a8; font-size: 23px; line-height: 30px; letter-spacing: -0.75px; }
.total sup { font-size: 13.5px; vertical-align: 6px; letter-spacing: -0.7px; }
.otp { width: 454px; }
.otp h2 { text-align: center; }
.field {
  height: 36px;
  margin-top: 25px;
  padding: 0 3px 0 10px;
  display: flex;
  align-items: center;
  justify-content: space-between;
  border: 1px solid #b9c9d8;
  border-radius: 3px;
  background: #fff;
  font-size: 14px;
}
.field span { margin: -1px 0 0 38px; letter-spacing: -0.05px; }
.otp p { margin: 12px -6px 0 0; font-size: 14px; line-height: 19.3px; letter-spacing: -0.385px; }
.buttons { margin-top: 16px; display: flex; gap: 16px; }
.buttons button {
  flex: 1;
  height: 44px;
  padding: 0;
  border: 0;
  border-radius: 5px;
  font: 500 14px Inter, sans-serif;
}
.cancel { background: #f6f7f9; color: #21252c; letter-spacing: -0.3px; }
.pay { background: #0070a8; color: #fff; }
.card-foot {
  height: 76px;
  padding: 0 24px;
  display: flex;
  align-items: center;
}
.contact-icon {
  width: 40px;
  height: 40px;
  display: grid;
  place-items: center;
  border: 1px solid #e7eaee;
  border-radius: 5px;
}
.card-foot a { margin-left: 12px; font-size: 16px; color: #259dc8; letter-spacing: -0.2px; }
.card-foot .mail { letter-spacing: -0.3px; }
.phone { width: 135px; }
.badges { margin-left: auto; display: flex; align-items: center; gap: 8px; }
.drop {
  position: absolute;
  right: 0;
  top: 460px;
  width: 39px;
  height: 34px;
  padding: 6px 0 0 5px;
  border-radius: 17px 0 0 17px;
  background: #fff;
  box-shadow: 0 1px 7px #0003;
}
.zalo { position: absolute; left: 1783px; top: 884px; }

/* Taskbar */
.taskbar {
  position: relative;
  height: 47px;
  display: flex;
  justify-content: space-between;
}
.wallpaper { position: absolute; inset: 0; }
.apps, .tray { position: relative; display: flex; align-items: center; color: #fff; }
.apps { padding-left: 463px; }
.start { width: 36px; }
.search {
  width: 220px;
  height: 32px;
  margin-right: 2px;
  padding: 0 0 0 10px;
  display: flex;
  align-items: center;
  border: 1px solid #ffffff2b;
  border-radius: 16px;
  background: #ffffff24;
  font-size: 14px;
}
.search span { flex: 1; margin-left: 10px; color: #d9e0f0; letter-spacing: -0.2px; }
.app {
  position: relative;
  width: 44px;
  height: 47px;
  display: grid;
  place-items: center;
}
.run::after {
  content: "";
  position: absolute;
  left: 19px;
  bottom: 4px;
  width: 6px;
  height: 3px;
  border-radius: 2px;
  background: #a9a5c6;
}
.active svg { position: relative; }
.active::before {
  content: "";
  position: absolute;
  inset: 4px 2px 3px;
  border: 1px solid #ffffff14;
  border-radius: 4px;
  background: #ffffff17;
}
.active::after { left: 14px; width: 16px; background: #c3b9ea; }
.app em {
  position: absolute;
  right: 6px;
  top: 8px;
  width: 14px;
  height: 14px;
  border-radius: 7px;
  background: #ea4c4d;
  font: 600 9.5px/14px "Open Sans", sans-serif;
  text-align: center;
}
.tray { padding-right: 18px; }
.tray svg { margin-right: 6px; }
.tray .sync { margin-left: 11px; margin-right: 16px; }
.tray .mic { margin-right: 16px; stroke: #b9b6cb; }
.tray .clock + svg { margin: 0; }
.clock {
  width: 68px;
  margin: 1px 7px 0 -9px;
  display: flex;
  flex-direction: column;
  align-items: flex-end;
  font-size: 12px;
  line-height: 16px;
  white-space: nowrap;
}
```
